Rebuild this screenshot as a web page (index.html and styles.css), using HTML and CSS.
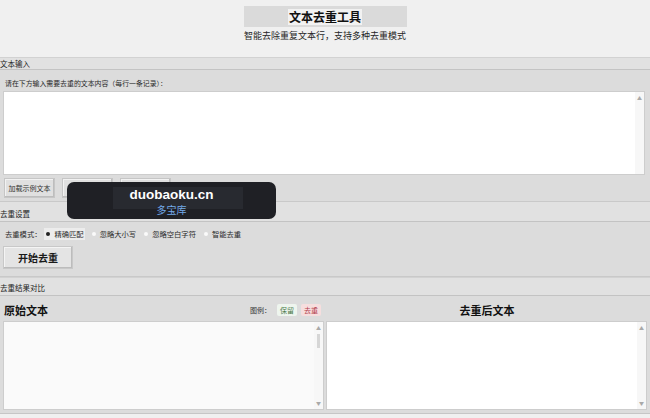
FILE: index.html
```html
<!DOCTYPE html>
<html lang="zh-CN">
<head>
<meta charset="UTF-8">
<meta name="viewport" content="width=device-width, initial-scale=1.0">
<title>文本去重工具</title>
<link rel="stylesheet" href="styles.css">
</head>
<body>
<div class="header">
<div class="title-box"><h1>文本去重工具</h1></div>
<div class="subtitle">智能去除重复文本行，支持多种去重模式</div>
</div>

<div class="bar bar-first"><span>文本输入</span></div>
<div class="panel input-panel">
<div class="hint">请在下方输入需要去重的文本内容（每行一条记录）：</div>
<div class="textbox input-box"><div class="scroll"><span class="arrow">▲</span></div></div>
<div class="btn-row">
<button class="small-btn">加载示例文本</button>
<button class="small-btn">复制输入</button>
<button class="small-btn">清空输入</button>
</div>
</div>

<div class="bar bar-settings"><span>去重设置</span></div>
<div class="panel settings-panel">
<div class="mode-row">
<span class="mode-label">去重模式：</span>
<label class="radio checked"><i class="dot"></i>精确匹配</label>
<label class="radio"><i class="dot"></i>忽略大小写</label>
<label class="radio"><i class="dot"></i>忽略空白字符</label>
<label class="radio"><i class="dot"></i>智能去重</label>
</div>
<button class="start-btn">开始去重</button>
</div>

<div class="bar bar-result"><span>去重结果对比</span></div>
<div class="panel result-panel">
<div class="result-col">
<div class="col-head">
<span class="col-title">原始文本</span>
<span class="legend">图例：<b class="tag keep">保留</b><b class="tag drop">去重</b></span>
</div>
<div class="textbox left-box"><div class="scroll"><span class="arrow">▲</span><span class="thumb"></span><span class="arrow">▼</span></div></div>
</div>
<div class="result-col">
<div class="col-head center">
<span class="col-title">去重后文本</span>
</div>
<div class="textbox right-box"><div class="scroll"><span class="arrow">▲</span><span class="arrow">▼</span></div></div>
</div>
</div>

<div class="toast">
<div class="toast-mark"></div>
<div class="toast-text">
<div class="toast-site">duobaoku.cn</div>
<div class="toast-name">多宝库</div>
</div>
</div>
</body>
</html>
```

FILE: styles.css
```css
:root {
--page-bg: #f0f0f0;
--panel-bg: #dcdcdc;
--bar-bg: #e1e1e1;
--line: #c3c3c3;
}

body {
margin: 0;
background: var(--page-bg);
font-family: "Noto Sans CJK SC", "Liberation Sans", sans-serif;
color: #1e1e1e;
position: relative;
}

.header {
height: 57px;
padding-top: 6px;
box-sizing: border-box;
text-align: center;
}

.title-box {
width: 163px;
height: 21px;
margin: 0 auto;
background: #dadada;
display: flex;
justify-content: center;
align-items: center;
}

.title-box h1 {
margin: 0;
font-size: 12px;
line-height: 16px;
font-weight: bold;
background: #f2f2f2;
padding: 0 1px;
color: #111;
}

.subtitle {
margin-top: 2px;
font-size: 9px;
line-height: 14px;
color: #262626;
}

.bar {
background: var(--bar-bg);
border-top: 1px solid #d2d2d2;
border-bottom: 1px solid var(--line);
font-size: 7.5px;
color: #222;
}

.bar-first {
height: 11px;
line-height: 11px;
}

.bar-settings {
height: 19px;
line-height: 24px;
border-top: 1px solid #c9c9c9;
}

.bar-result {
height: 17px;
line-height: 19px;
}

.panel {
background: var(--panel-bg);
}

.input-panel {
padding: 8px 5px 3px 3px;
}

.hint {
font-size: 6.9px;
line-height: 10px;
height: 10px;
margin: 0 0 3px 2px;
color: #2a2a2a;
}

.textbox {
background: #fff;
border: 1px solid #cdcdcd;
box-sizing: border-box;
display: flex;
justify-content: flex-end;
}

.input-box {
height: 84px;
}

.scroll {
width: 9px;
display: flex;
flex-direction: column;
align-items: center;
justify-content: space-between;
background: #f7f7f7;
padding: 3px 0;
box-sizing: border-box;
}

.arrow {
font-size: 5px;
line-height: 6px;
color: #a9a9a9;
}

.thumb {
width: 3px;
height: 14px;
background: #d6d6d6;
margin-bottom: 50px;
}

.btn-row {
display: flex;
gap: 7px;
margin-top: 3px;
padding-left: 1px;
}

.small-btn {
height: 20px;
width: 51px;
padding: 0;
font-family: inherit;
font-size: 7px;
color: #333;
background: #e0e0e0;
border: 1px solid #c6c6c6;
box-shadow: inset -1px -1px 0 #bdbdbd, inset 1px 1px 0 #f2f2f2;
}

.settings-panel {
padding: 6px 3px 7px 3px;
border-bottom: 1px solid #c9c9c9;
}

.mode-row {
display: flex;
align-items: center;
height: 12px;
font-size: 7.3px;
color: #2a2a2a;
padding-left: 2px;
}

.mode-label {
margin-right: 3px;
}

.radio {
display: flex;
align-items: center;
gap: 4px;
padding: 1px 1px 1px 2px;
margin-right: 5px;
}

.radio.checked {
background: #ececec;
}

.dot {
width: 4px;
height: 4px;
border-radius: 50%;
background: #fafafa;
display: inline-block;
}

.radio.checked .dot {
background: #222;
}

.start-btn {
display: block;
margin-top: 6px;
width: 70px;
height: 23px;
font-family: inherit;
font-size: 10px;
font-weight: bold;
color: #1a1a1a;
background: #e4e4e4;
border: 1px solid #c8c8c8;
box-shadow: inset -1px -1px 0 #bcbcbc, inset 1px 1px 0 #f4f4f4;
}

.result-panel {
display: flex;
gap: 2px;
padding: 2px 3px 3px 3px;
border-bottom: 1px solid #c6c6c6;
}

.result-col {
flex: 1;
}

.col-head {
height: 23px;
display: flex;
align-items: center;
justify-content: space-between;
padding-left: 1px;
}

.col-head.center {
justify-content: center;
}

.col-title {
font-size: 11px;
font-weight: bold;
color: #111;
}

.legend {
font-size: 7px;
color: #333;
display: flex;
align-items: center;
}

.tag {
font-weight: normal;
padding: 1px 3px;
margin-left: 4px;
border-radius: 2px;
}

.tag.keep {
background: #eef5ee;
color: #4a7a4a;
margin-left: 6px;
}

.tag.drop {
background: #f6dede;
color: #b23a4a;
margin-right: 3px;
}

.left-box,
.right-box {
height: 89px;
}

.left-box {
background: #fafafa;
}

.toast {
position: absolute;
left: 67px;
top: 182px;
width: 209px;
height: 37px;
border-radius: 7px;
background: #1f2025;
}

.toast-mark {
position: absolute;
left: 46px;
top: 5px;
width: 130px;
height: 22px;
background: #282a30;
}

.toast-text {
position: relative;
text-align: center;
padding-top: 5px;
}

.toast-site {
font-family: "Liberation Sans", sans-serif;
font-size: 13.5px;
line-height: 16px;
font-weight: bold;
color: #fff;
}

.toast-name {
font-size: 10px;
line-height: 13px;
color: #74aaea;
}
```
